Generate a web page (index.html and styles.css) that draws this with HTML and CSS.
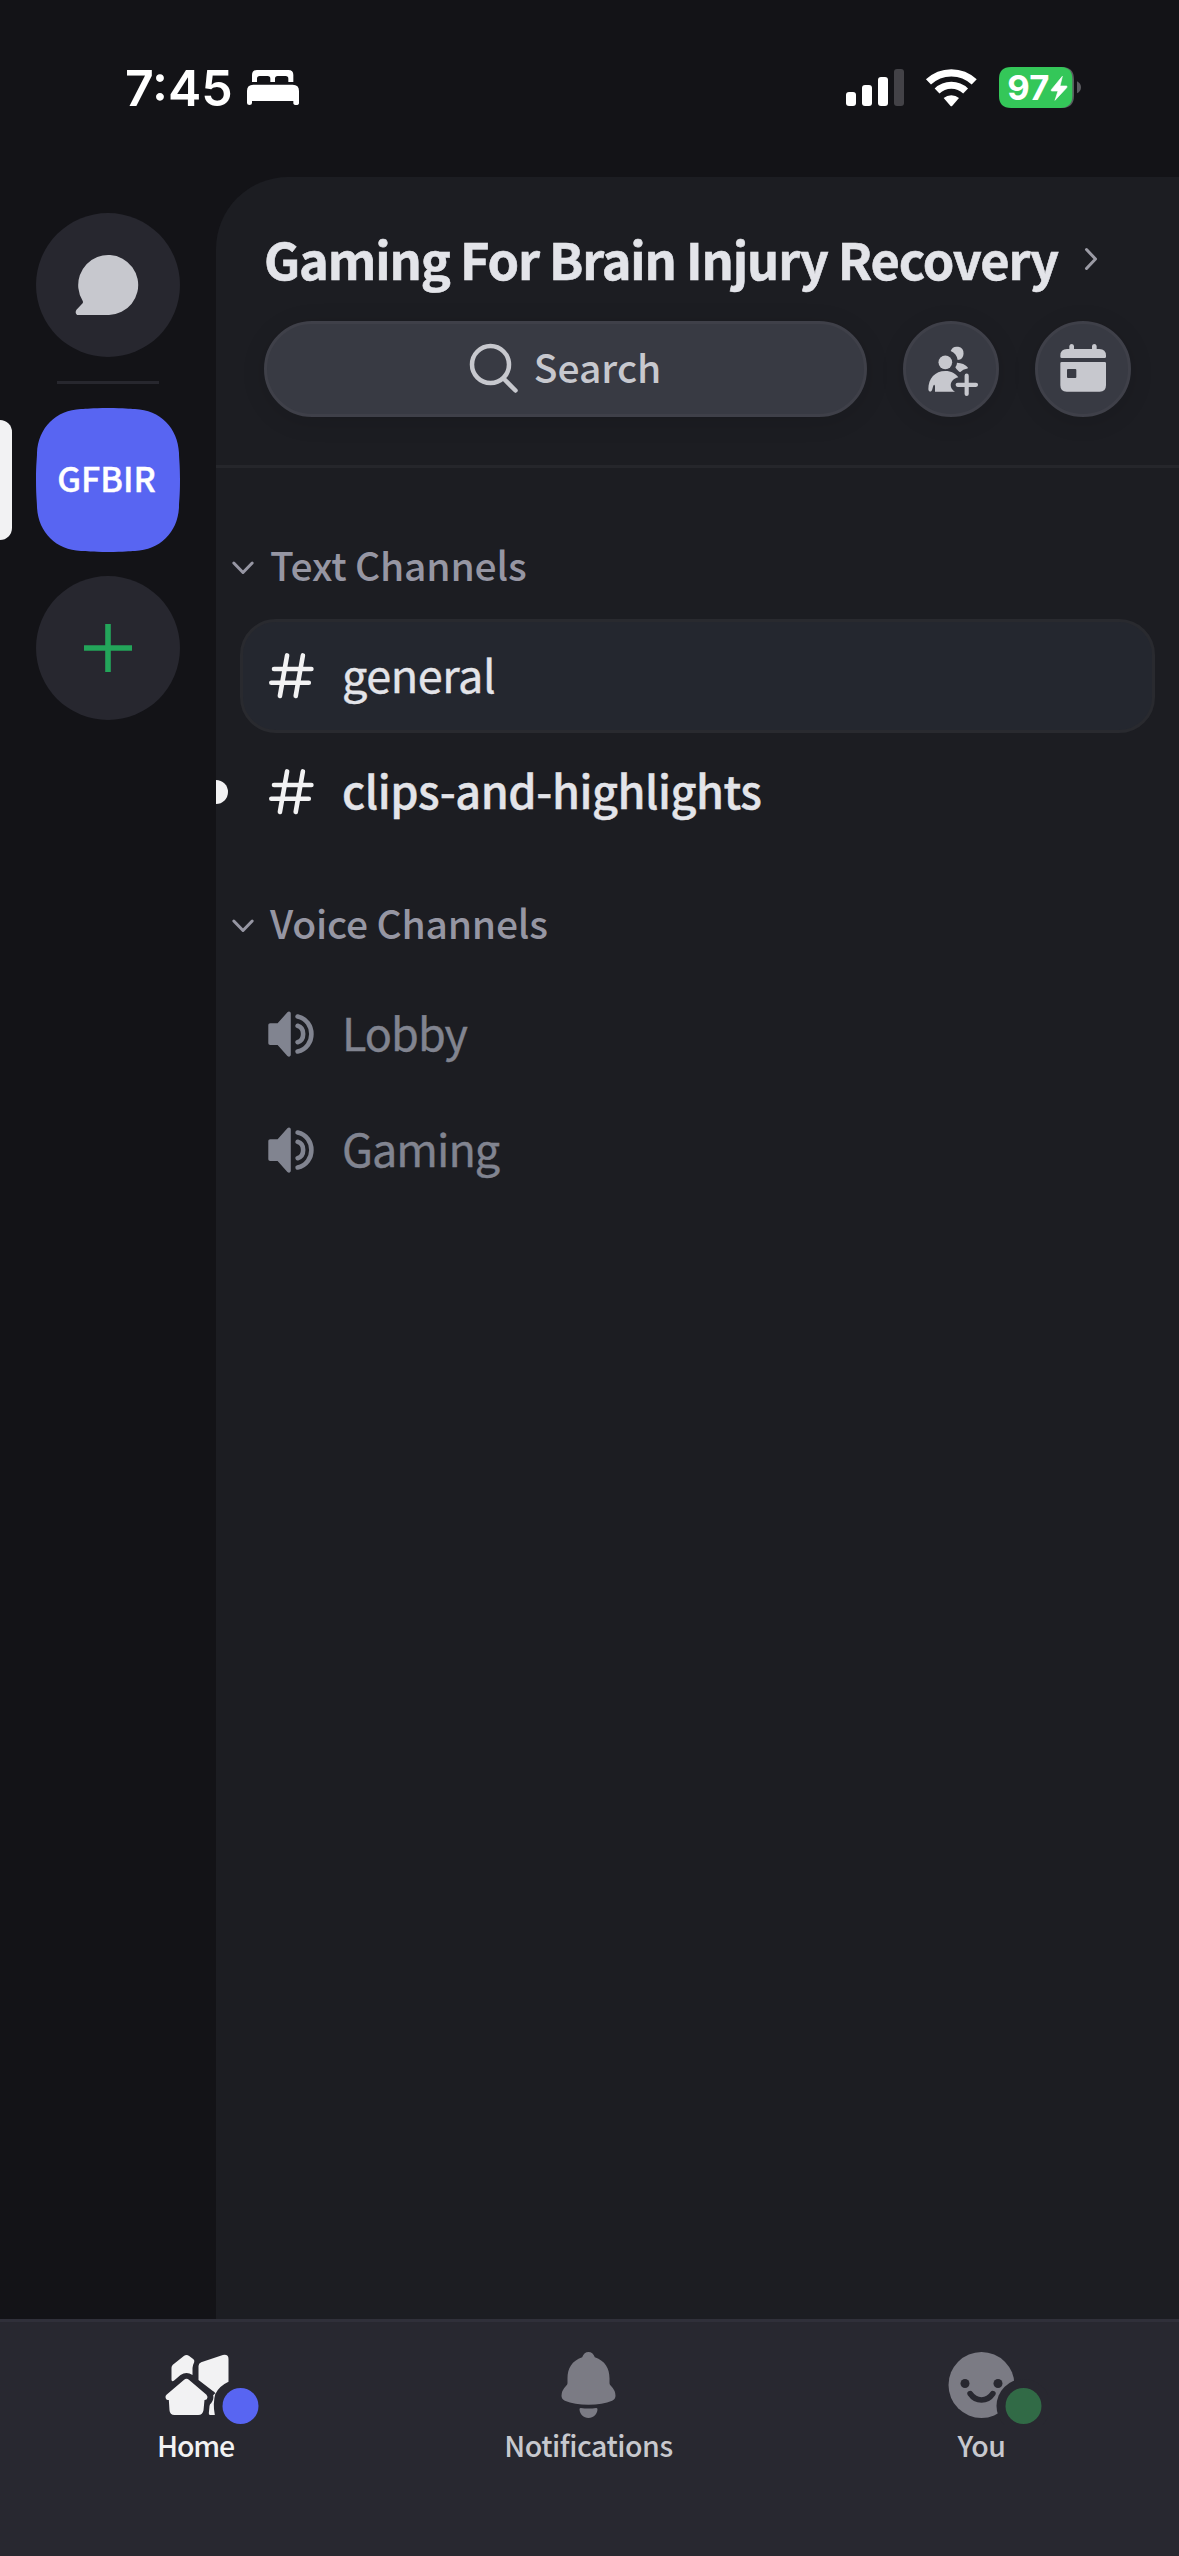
FILE: index.html
```html
<!DOCTYPE html>
<html lang="en">
<head>
<meta charset="utf-8">
<title>Gaming For Brain Injury Recovery</title>
<link rel="stylesheet" href="styles.css">
</head>
<body>
<svg class="defs" width="0" height="0" aria-hidden="true">
  <symbol id="hash" viewBox="0 0 48 48">
    <g fill="none" stroke="currentColor" stroke-width="4.6" stroke-linecap="round">
      <path d="M7 17H44.4M4.3 30.7H41.8M20.1 3.4L12.9 44M35.9 3.4L28.7 44"/>
    </g>
  </symbol>
  <symbol id="speaker" viewBox="0 0 48 48">
    <path fill="currentColor" d="M3.3 13.3H10.6L20.4 2.3C21.6 1 23.8 1.4 23.8 3.6V44.6C23.8 46.8 21.6 47.2 20.4 45.9L10.6 35H3.3C2 35 1.3 34.3 1.3 33V15.3C1.3 14 2 13.3 3.3 13.3Z"/>
    <path fill="none" stroke="currentColor" stroke-width="4.6" stroke-linecap="round" d="M30.6 15.8C38 18 38 30 30.6 32.2M30.6 6.5C49 10.5 49 37.5 30.6 41.5"/>
  </symbol>
  <symbol id="chevron" viewBox="0 0 30 30">
    <path fill="none" stroke="currentColor" stroke-width="3" stroke-linecap="round" stroke-linejoin="round" d="M5.8 10L15 19.5L24.2 10"/>
  </symbol>
</svg>

<header class="status">
  <div class="status-left">
    <span class="clock">7:45</span>
    <svg width="54" height="39" viewBox="438 87 162 117" fill="#fff">
      <path d="M456 129V108Q456 93 471 93H565Q580 93 580 108V129H565V119Q565 111 557 111H533Q525 111 525 119V129H511V119Q511 111 503 111H479Q471 111 471 119V129Z"/>
      <path d="M441 156Q441 137 460 137H578Q597 137 597 156V192Q597 198 588.5 198Q580 198 580 192V186H456V192Q456 198 448.5 198Q441 198 441 192Z"/>
    </svg>
  </div>
  <div class="status-right">
    <svg width="60" height="43" viewBox="75 78 180 129" fill="#fff">
      <rect x="78" y="156" width="30" height="42" rx="9"/>
      <rect x="126" y="135" width="30" height="63" rx="9"/>
      <rect x="174" y="111" width="30" height="87" rx="9"/>
      <rect x="222" y="87" width="30" height="111" rx="9" fill="#434247"/>
    </svg>
    <svg width="53" height="43" viewBox="315 78 159 129">
      <path fill="none" stroke="#fff" stroke-width="22" d="M325.4 125.9A99.5 99.5 0 0 1 462.6 125.9"/>
      <path fill="none" stroke="#fff" stroke-width="21" d="M351.2 153A62 62 0 0 1 436.8 153"/>
      <path fill="#fff" d="M371 174A35 35 0 0 1 417 174L397 197Q394 200 391 197Z"/>
    </svg>
    <svg width="84" height="43" viewBox="534 78 252 129">
      <path fill="#5b5b60" d="M725 81Q762 81 762 118V167Q762 204 725 204ZM771 124Q783 130 783 142Q783 154 771 160Z"/>
      <path fill="#34c759" d="M573 81H724Q757 83 757 117V168Q757 201 724 204H573Q537 204 537 168V117Q537 81 573 81Z"/>
      <text class="battery-text" x="562" y="181">97</text>
      <path fill="#fff" stroke="#fff" stroke-width="2" stroke-linejoin="round" d="M727 109L694 149Q692 153 696 153H714L705 181L740 143Q743 138 739 138H720Z"/>
    </svg>
  </div>
</header>

<main class="app">
  <nav class="servers">
    <div class="server">
      <svg width="72" height="72" viewBox="0 0 72 72"><path fill="#c7c8ce" d="M37 66H6.5C3.8 66 2.8 63 4.5 60.8L10.6 54.3Q11.4 53 10.5 51.5A30 30 0 1 1 37 66Z"/></svg>
    </div>
    <div class="rule"></div>
    <div class="server server-active">
      <svg class="squircle" width="144" height="144" viewBox="0 0 144 144"><path fill="#5865f2" d="M0 72C0 55 1 51 1 45C2 20 20 2 45 1C51 1 55 0 72 0C89 0 93 1 99 1C124 2 142 20 143 45C143 51 144 55 144 72C144 89 143 93 143 99C142 124 124 142 99 143C93 143 89 144 72 144C55 144 51 143 45 143C20 142 2 124 1 99C1 93 0 89 0 72Z"/></svg>
      <span class="initials">GFBIR</span>
    </div>
    <div class="server">
      <svg width="48" height="48" viewBox="0 0 48 48"><path stroke="#23a55a" stroke-width="5.6" d="M0 24H48M24 0V48"/></svg>
    </div>
  </nav>

  <section class="panel">
    <div class="head">
      <div class="title-row">
        <h1 class="title">Gaming For Brain Injury Recovery</h1>
        <svg class="title-arrow" width="30" height="30" viewBox="0 0 30 30"><path fill="none" stroke="#9b9ba5" stroke-width="3" stroke-linecap="round" stroke-linejoin="round" d="M10.5 6.500L19.500 16L10.500 25.500"/></svg>
      </div>
      <div class="tools">
        <div class="search">
          <svg width="54" height="54" viewBox="0 0 54 54" fill="none" stroke="#c7c8ce" stroke-width="4.5" stroke-linecap="round"><circle cx="23.5" cy="22.6" r="18.5"/><path d="M36.5 36.5L48.5 48.5"/></svg>
          <span class="search-label">Search</span>
        </div>
        <div class="round">
          <svg width="90" height="90" viewBox="138 72 270 270" fill="#c7c8ce">
            <circle cx="256" cy="187" r="20.5"/>
            <path d="M272 153A20 20 0 1 1 293 180C291 167 284 158 272 153Z"/>
            <path d="M291 188Q312 189 323 202Q326 206 320 206Q309 208 302 215Q299 217 296 214Q289 209 286 202Q291 196 291 188Z"/>
            <path d="M205 268C205 235 225 213 256 213C274 213 287 221 295 232C265 240 268 266 285 275H225V258Q222 250 219 260L216 271Q214 275 210 275Q205 274 205 268Z"/>
            <path fill="none" stroke="#c7c8ce" stroke-width="12.5" stroke-linecap="round" d="M293 254.5H348M320 227V282"/>
          </svg>
        </div>
        <div class="round">
          <svg width="90" height="90" viewBox="534 72 270 270" fill="#c7c8ce">
            <path d="M605 174Q601 174 601 170V167Q601 147 621 147H628V138Q629 132 635 132Q641 132 642 138V147H696V138Q697 132 703 132Q709 132 710 138V147H718Q738 147 738 167V170Q738 174 734 174Z"/>
            <path fill-rule="evenodd" d="M605 186H734Q738 186 738 190V256Q738 275 719 275H620Q601 275 601 256V190Q601 186 605 186ZM624 207Q621 207 621 210V231Q621 234 624 234H646Q649 234 649 231V210Q649 207 646 207Z"/>
          </svg>
        </div>
      </div>
    </div>

    <div class="group">
      <div class="group-head"><svg width="30" height="30"><use href="#chevron"/></svg><span class="group-label">Text Channels</span></div>
      <div class="channel channel-selected"><svg width="48" height="48"><use href="#hash"/></svg><span class="name">general</span></div>
      <div class="channel channel-unread"><svg width="48" height="48"><use href="#hash"/></svg><span class="name">clips-and-highlights</span></div>
    </div>
    <div class="group">
      <div class="group-head"><svg width="30" height="30"><use href="#chevron"/></svg><span class="group-label">Voice Channels</span></div>
      <div class="channel channel-voice"><svg width="48" height="48"><use href="#speaker"/></svg><span class="name">Lobby</span></div>
      <div class="channel channel-voice"><svg width="48" height="48"><use href="#speaker"/></svg><span class="name">Gaming</span></div>
    </div>
  </section>
</main>

<footer class="tabs">
  <div class="tab tab-active">
    <svg width="130" height="76" viewBox="94.5 147 390 228">
      <g fill="#f2f2f3">
        <path d="M213 203Q213 198 217 194L250 168Q258 162 266 168L279 178Q283 182 281 187Q277 195 276 204V225Q258 213 240 225L220 242Q213 246 213 239Z"/>
        <path d="M294 198Q294 190 302 187L367 165Q384 162 384 177V245Q356 258 345 281Q343 275 336 272L294 240Z"/>
        <path d="M345 279Q336 311 343 345H329Q324 345 325 339L327 318Q328 312 332 310Q341 298 338 286Z"/>
        <path d="M250 240Q258 233 266 240L318 284Q324 291 319 298Q316 300 312 300L309 331Q307 345 293 345H222Q208 345 207 331L205 300H202Q195 299 195 290Q195 287 198 284Z"/>
      </g>
      <circle cx="420" cy="318" r="54" fill="#5865f2"/>
    </svg>
    <span class="tab-label label-home">Home</span>
  </div>
  <div class="tab">
    <svg width="130" height="76" viewBox="133.5 147 390 228" fill="#7b7b84">
      <path d="M305 172Q311 156 324 156Q337 156 343 172C374 183 387 205 387 235V250Q387 254 391 257Q405 271 405 287Q405 297 395 302Q366 314 324 314Q282 314 253 302Q243 297 243 287Q243 271 257 257Q261 254 261 250V235C261 205 274 183 305 172Z"/>
      <path d="M301 324Q324 327 347 324Q351 324 351 328C350 344 339 354 324 354C309 354 298 344 297 328Q297 324 301 324Z"/>
    </svg>
    <span class="tab-label">Notifications</span>
  </div>
  <div class="tab">
    <svg width="130" height="76" viewBox="52.5 147 390 228">
      <circle cx="243" cy="255" r="99" fill="#7b7b84"/>
      <g fill="#282830"><circle cx="193.5" cy="250.5" r="13.5"/><circle cx="292.5" cy="250.5" r="13.5"/><circle cx="369" cy="318" r="81"/></g>
      <path fill="none" stroke="#282830" stroke-width="17" stroke-linecap="round" d="M209 281Q222 300 243 300Q264 300 277 281"/>
      <circle cx="369" cy="318" r="54" fill="#316a46"/>
    </svg>
    <span class="tab-label">You</span>
  </div>
</footer>
</body>
</html>
```
FILE: styles.css
```css
* { box-sizing: border-box; }
body {
  margin: 0;
  width: 1179px;
  height: 2556px;
  display: flex;
  flex-direction: column;
  overflow: hidden;
  background: #131317;
  color: #e3e4e9;
  font-family: "Noto Sans CJK SC", "Noto Sans", sans-serif;
  white-space: nowrap;
}
svg { display: block; flex: none; }
.defs { position: absolute; }

.status {
  height: 177px;
  flex: none;
  display: flex;
  justify-content: space-between;
  align-items: center;
  padding: 0 97px 2px 125px;
}
.status-left { display: flex; align-items: center; gap: 12px; }
.status-right { display: flex; gap: 20px; }
.clock {
  width: 109px;
  font: 600 50px/60px Inter, sans-serif;
  color: #fff;
}
.battery-text {
  font: 700 104px Inter, sans-serif;
  fill: #fff;
}

.app { height: 2142px; flex: none; display: flex; }
.servers {
  width: 216px;
  flex: none;
  display: flex;
  flex-direction: column;
  align-items: center;
  gap: 24px;
  padding-top: 36px;
}
.server {
  position: relative;
  width: 144px;
  height: 144px;
  border-radius: 50%;
  background: #27272f;
  display: flex;
  align-items: center;
  justify-content: center;
}
.rule { width: 102px; height: 3px; background: #27272e; }
.server-active { background: none; }
.server-active::before {
  content: "";
  position: absolute;
  left: -36px;
  top: 12px;
  width: 12px;
  height: 120px;
  border-radius: 0 12px 12px 0;
  background: #f2f2f3;
}
.squircle { position: absolute; inset: 0; }
.initials {
  position: relative;
  padding: 0 3px 4px 0;
  font-size: 34px;
  font-weight: 500;
  line-height: 50px;
  color: #fff;
  -webkit-text-stroke: .4px currentColor;
}

.panel {
  flex: 1;
  min-width: 0;
  background: #1c1d22;
  border-top-left-radius: 72px;
}
.head {
  height: 291px;
  padding: 51px 48px 0;
  border-bottom: 3px solid #25262b;
}
.title-row { display: flex; align-items: center; height: 60px; }
.title {
  margin: 0;
  width: 812px;
  font-size: 50.5px;
  font-weight: 700;
  line-height: 60px;
  letter-spacing: -1.15px;
  -webkit-text-stroke: .6px currentColor;
}
.tools { display: flex; gap: 36px; margin-top: 33px; }
.search, .round {
  height: 96px;
  border: 3px solid #3f4049;
  border-radius: 48px;
  background: #383a43;
  box-shadow: 0 4px 24px rgba(0, 0, 0, .12);
  display: flex;
  align-items: center;
  justify-content: center;
}
.search { flex: 1; gap: 13px; padding-right: 3px; color: #c7c8ce; }
.search-label { font-size: 39px; font-weight: 500; line-height: 56px; padding-bottom: 6px; }
.round { width: 96px; }

.group { padding: 72px 24px 0 12px; }
.group + .group { padding-top: 47px; }
.group-head {
  display: flex;
  align-items: center;
  gap: 12px;
  height: 56px;
  margin-bottom: 23px;
  color: #9696a3;
}
.group-label {
  font-size: 39px;
  font-weight: 500;
  line-height: 56px;
  padding-bottom: 8px;
  letter-spacing: -.2px;
}
.channel {
  position: relative;
  height: 114px;
  margin: 0 0 2px 12px;
  padding: 0 27px;
  display: flex;
  align-items: center;
  gap: 27px;
  font-size: 45px;
  letter-spacing: -.45px;
}
.channel svg { color: #f2f2f3; }
.name { line-height: 64px; padding-bottom: 5px; -webkit-text-stroke: .4px currentColor; }
.channel-selected::before {
  content: "";
  position: absolute;
  inset: 0;
  border: 3px solid #292a2f;
  border-radius: 36px;
  background: #24272f;
}
.channel-selected > * { position: relative; }
.channel-unread { font-weight: 500; }
.channel-unread::before {
  content: "";
  position: absolute;
  left: -24px;
  top: 45px;
  width: 12px;
  height: 24px;
  border-radius: 0 12px 12px 0;
  background: #f2f2f3;
}
.channel-voice { letter-spacing: -1px; }
.channel-voice, .channel-voice svg { color: #818490; }

.tabs {
  flex: 1;
  display: flex;
  border-top: 3px solid #30303a;
  background: #282830;
}
.tab {
  flex: 1;
  display: flex;
  flex-direction: column;
  align-items: center;
  padding-top: 27px;
  color: #c7c8ce;
}
.tab-label {
  margin: 1px 2px 0 0;
  font-size: 28.5px;
  font-weight: 500;
  line-height: 38px;
  letter-spacing: -.45px;
}
.label-home { letter-spacing: -1.2px; }
.tab-active { color: #f2f2f3; }
```
